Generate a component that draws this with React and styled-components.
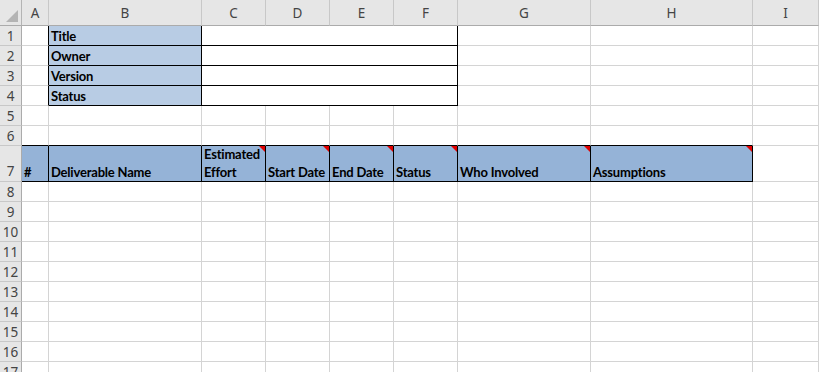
import React from 'react'
import styled, { createGlobalStyle } from 'styled-components'

const GlobalStyle = createGlobalStyle`
  html, body {
    margin: 0;
    padding: 0;
    background: #ffffff;
    overflow: hidden;
  }
`

const grid = '#d4d4d4'
const black = '#000000'

const COLS = ['A', 'B', 'C', 'D', 'E', 'F', 'G', 'H', 'I']
const WIDTHS = [22, 27, 153, 64, 64, 64, 64, 133, 162, 66]

const Sheet = styled.div`
  display: grid;
  grid-template-columns: ${WIDTHS.map(w => w + 'px').join(' ')};
  grid-template-rows: 26px repeat(6, 20px) 36px;
  grid-auto-rows: 20px;
  width: 819px;
  height: 372px;
  overflow: hidden;
  font-family: Lato, "Liberation Sans", sans-serif;
`

const Corner = styled.div`
  position: relative;
  background: #e6e6e6;
  border-right: 1px solid #b4b4b4;
  border-bottom: 1px solid #ababab;
  box-sizing: border-box;
  svg {
    position: absolute;
    right: 3px;
    bottom: 3px;
  }
`

const ColHead = styled.div`
  box-sizing: border-box;
  background: #e6e6e6;
  border-right: 1px solid #c8c8c8;
  border-bottom: 1px solid #ababab;
  display: flex;
  align-items: center;
  justify-content: center;
  padding-top: 1px;
  font-family: "Noto Sans", "Open Sans", sans-serif;
  font-size: 13.5px;
  color: #444444;
`

const RowHead = styled.div`
  box-sizing: border-box;
  background: #e6e6e6;
  border-right: 1px solid #ababab;
  border-bottom: 1px solid #c8c8c8;
  display: flex;
  align-items: ${p => (p.$tall ? 'flex-end' : 'center')};
  justify-content: center;
  padding-bottom: ${p => (p.$tall ? '1px' : '0')};
  font-family: "Noto Sans", "Open Sans", sans-serif;
  font-size: 13.5px;
  color: #444444;
`

const Cell = styled.div`
  position: relative;
  box-sizing: border-box;
  grid-column: span ${p => p.$span || 1};
  background: ${p => p.$bg || '#ffffff'};
  border-right: 1px solid ${p => (p.$br ? black : grid)};
  border-bottom: 1px solid ${p => (p.$bb ? black : grid)};
  display: flex;
  align-items: flex-end;
  padding: 0 2px 0 2px;
  font-size: 13px;
  font-weight: 700;
  letter-spacing: -0.2px;
  line-height: 18px;
  color: #000000;
  white-space: pre;
  overflow: hidden;
`

const Comment = styled.span`
  position: absolute;
  top: 0;
  right: 0;
  width: 0;
  height: 0;
  border-top: 6px solid #e00000;
  border-left: 6px solid transparent;
`

const infoLabels = ['Title', 'Owner', 'Version', 'Status']

const headers = [
  { text: '#' },
  { text: 'Deliverable Name' },
  { text: 'Estimated\nEffort', note: true },
  { text: 'Start Date', note: true },
  { text: 'End Date', note: true },
  { text: 'Status', note: true },
  { text: 'Who Involved', note: true },
  { text: 'Assumptions', note: true },
]

const Blank = ({ n, bb, br }) =>
  Array.from({ length: n }).map((_, i) => <Cell key={i} $bb={bb} $br={br} />)

function InfoRow({ row, label }) {
  return (
    <>
      <RowHead>{row}</RowHead>
      <Cell $br />
      <Cell $bg="#b8cce4" $br $bb>{label}</Cell>
      <Cell $span={4} $br $bb />
      <Cell />
      <Cell />
      <Cell />
    </>
  )
}

export default function App() {
  const tailRows = [8, 9, 10, 11, 12, 13, 14, 15, 16, 17]

  return (
    <>
      <GlobalStyle />
      <Sheet>
        <Corner>
          <svg width="12" height="12" viewBox="0 0 12 12">
            <polygon points="12,0 12,12 0,12" fill="#b4b4b4" />
          </svg>
        </Corner>
        {COLS.map(c => (
          <ColHead key={c}>{c}</ColHead>
        ))}

        {infoLabels.map((label, i) => (
          <InfoRow key={label} row={i + 1} label={label} />
        ))}

        <RowHead>5</RowHead>
        <Blank n={9} />

        <RowHead>6</RowHead>
        <Blank n={8} bb />
        <Cell />

        <RowHead $tall>7</RowHead>
        {headers.map(h => (
          <Cell key={h.text} $bg="#95b3d7" $br $bb>
            {h.text}
            {h.note && <Comment />}
          </Cell>
        ))}
        <Cell />

        {tailRows.map(r => (
          <React.Fragment key={r}>
            <RowHead>{r}</RowHead>
            <Blank n={9} />
          </React.Fragment>
        ))}
      </Sheet>
    </>
  )
}
